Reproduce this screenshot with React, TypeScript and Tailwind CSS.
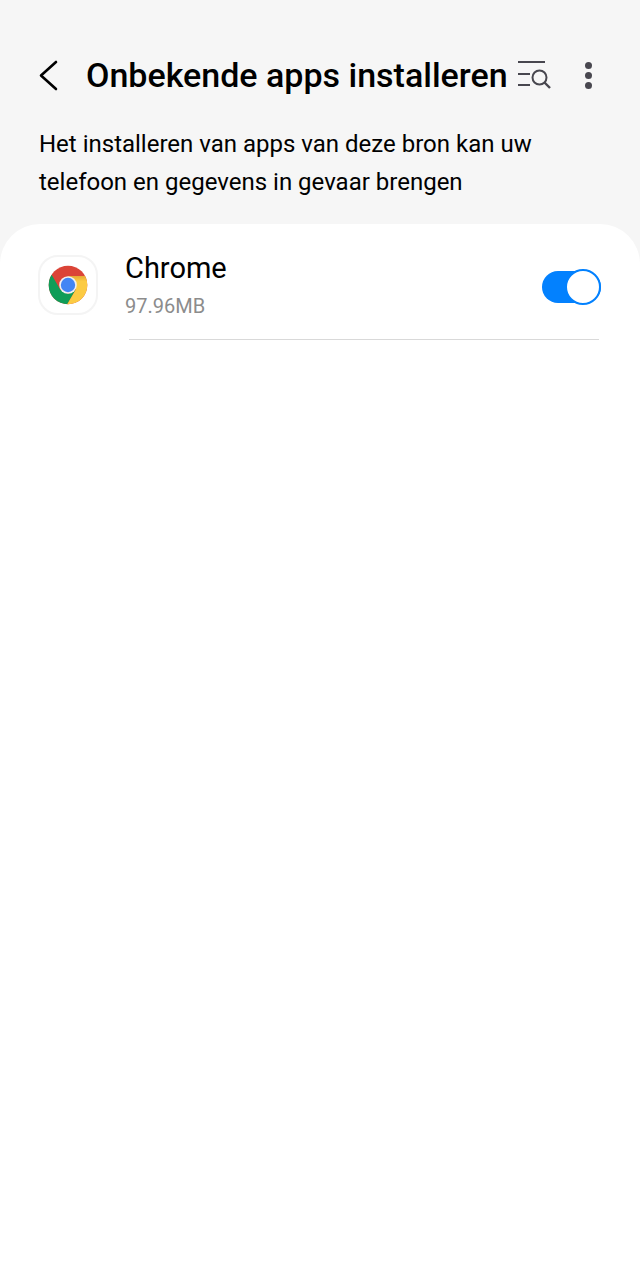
import { useState } from "react";

const ChromeLogo = () => (
  <svg viewBox="-20 -20 40 40" className="h-10 w-10" aria-hidden="true">
    <defs>
      <clipPath id="chrome-disc">
        <circle r="19.3" />
      </clipPath>
      <linearGradient id="yellow-shade" x1="0" y1="0" x2="0" y2="1">
        <stop offset="0" stopColor="#e5a835" />
        <stop offset="0.18" stopColor="#fccb43" />
      </linearGradient>
    </defs>
    <g clipPath="url(#chrome-disc)">
      <rect x="-20" y="-20" width="40" height="40" fill="#db4437" />
      <path d="M-16.5 -10.5 L-7.8 4.5 L0 9 L7.8 4.5 L-1.5 20.5 H-20 V-10.5 Z" fill="#0f9d58" />
      <path d="M0 -9 H20 V20 H-1.2 L7.8 4.5 Z" fill="url(#yellow-shade)" />
    </g>
    <circle r="8.8" fill="#f1f1f1" />
    <circle r="7.2" fill="#4285f4" />
  </svg>
);

const App = () => {
  const [allowed, setAllowed] = useState(true);

  return (
    <div className="flex min-h-screen flex-col bg-[#f6f6f6] font-[Roboto,sans-serif] text-black">
      <header className="pt-[47px] pr-10 pl-9">
        <div className="flex h-14 items-center">
          <button type="button" aria-label="Terug" className="mr-6 shrink-0">
            <svg viewBox="0 0 26 32" className="h-8 w-[26px]" fill="none" stroke="currentColor" aria-hidden="true">
              <path d="M20 3 L5 16.5 L20 30" strokeWidth="2.6" strokeLinecap="round" strokeLinejoin="round" />
            </svg>
          </button>
          <h1 className="flex-1 text-[34px] leading-10 font-medium whitespace-nowrap">Onbekende apps installeren</h1>
          <button type="button" aria-label="Zoeken" className="mr-6 shrink-0">
            <svg viewBox="0 0 36 32" className="h-8 w-9" fill="none" stroke="#48474f" strokeWidth="2" aria-hidden="true">
              <path d="M2 3 H29 M2 15 H14 M2 26 H14" />
              <circle cx="23.5" cy="18.5" r="7" />
              <path d="M28.5 23.5 L34 29" strokeWidth="2.4" />
            </svg>
          </button>
          <button type="button" aria-label="Meer opties" className="shrink-0">
            <svg viewBox="0 0 24 32" className="h-8 w-6" fill="#48474f" aria-hidden="true">
              <circle cx="12.5" cy="6.5" r="3.5" />
              <circle cx="12.5" cy="16.5" r="3.5" />
              <circle cx="12.5" cy="26.5" r="3.5" />
            </svg>
          </button>
        </div>
        <p className="mt-[22px] mb-[23px] max-w-[520px] pl-[3px] text-2xl leading-[38px]">
          Het installeren van apps van deze bron kan uw telefoon en gegevens in gevaar brengen
        </p>
      </header>

      <main className="flex-1 rounded-t-[40px] bg-white px-[38px]">
        <div className="flex gap-[27px] pt-7">
          <div className="mt-[3px] flex h-[60px] w-[60px] shrink-0 items-center justify-center rounded-[20px] border-2 border-[#f4f4f4]">
            <ChromeLogo />
          </div>
          <div className="flex flex-1 items-start justify-between pb-[19px]">
            <div>
              <label htmlFor="allow-chrome" className="block text-[29px] leading-8">
                Chrome
              </label>
              <p className="mt-2 text-xl leading-7 text-[#8c8c8c]">97.96MB</p>
            </div>
            <label className="mt-[17px] mr-px flex h-9 w-[59px] cursor-pointer items-center">
              <input
                id="allow-chrome"
                type="checkbox"
                role="switch"
                checked={allowed}
                onChange={(e) => setAllowed(e.target.checked)}
                className="peer sr-only"
              />
              <span className="flex h-8 w-full items-center justify-start rounded-full bg-gray-400 text-gray-400 peer-checked:justify-end peer-checked:bg-[#0381fe] peer-checked:text-[#0381fe]">
                <span className="h-9 w-9 shrink-0 rounded-full border-2 border-current bg-white" />
              </span>
            </label>
          </div>
        </div>
        <hr className="mr-[3px] ml-[91px] border-[#d9d9d9]" />
      </main>
    </div>
  );
};

export default App;
